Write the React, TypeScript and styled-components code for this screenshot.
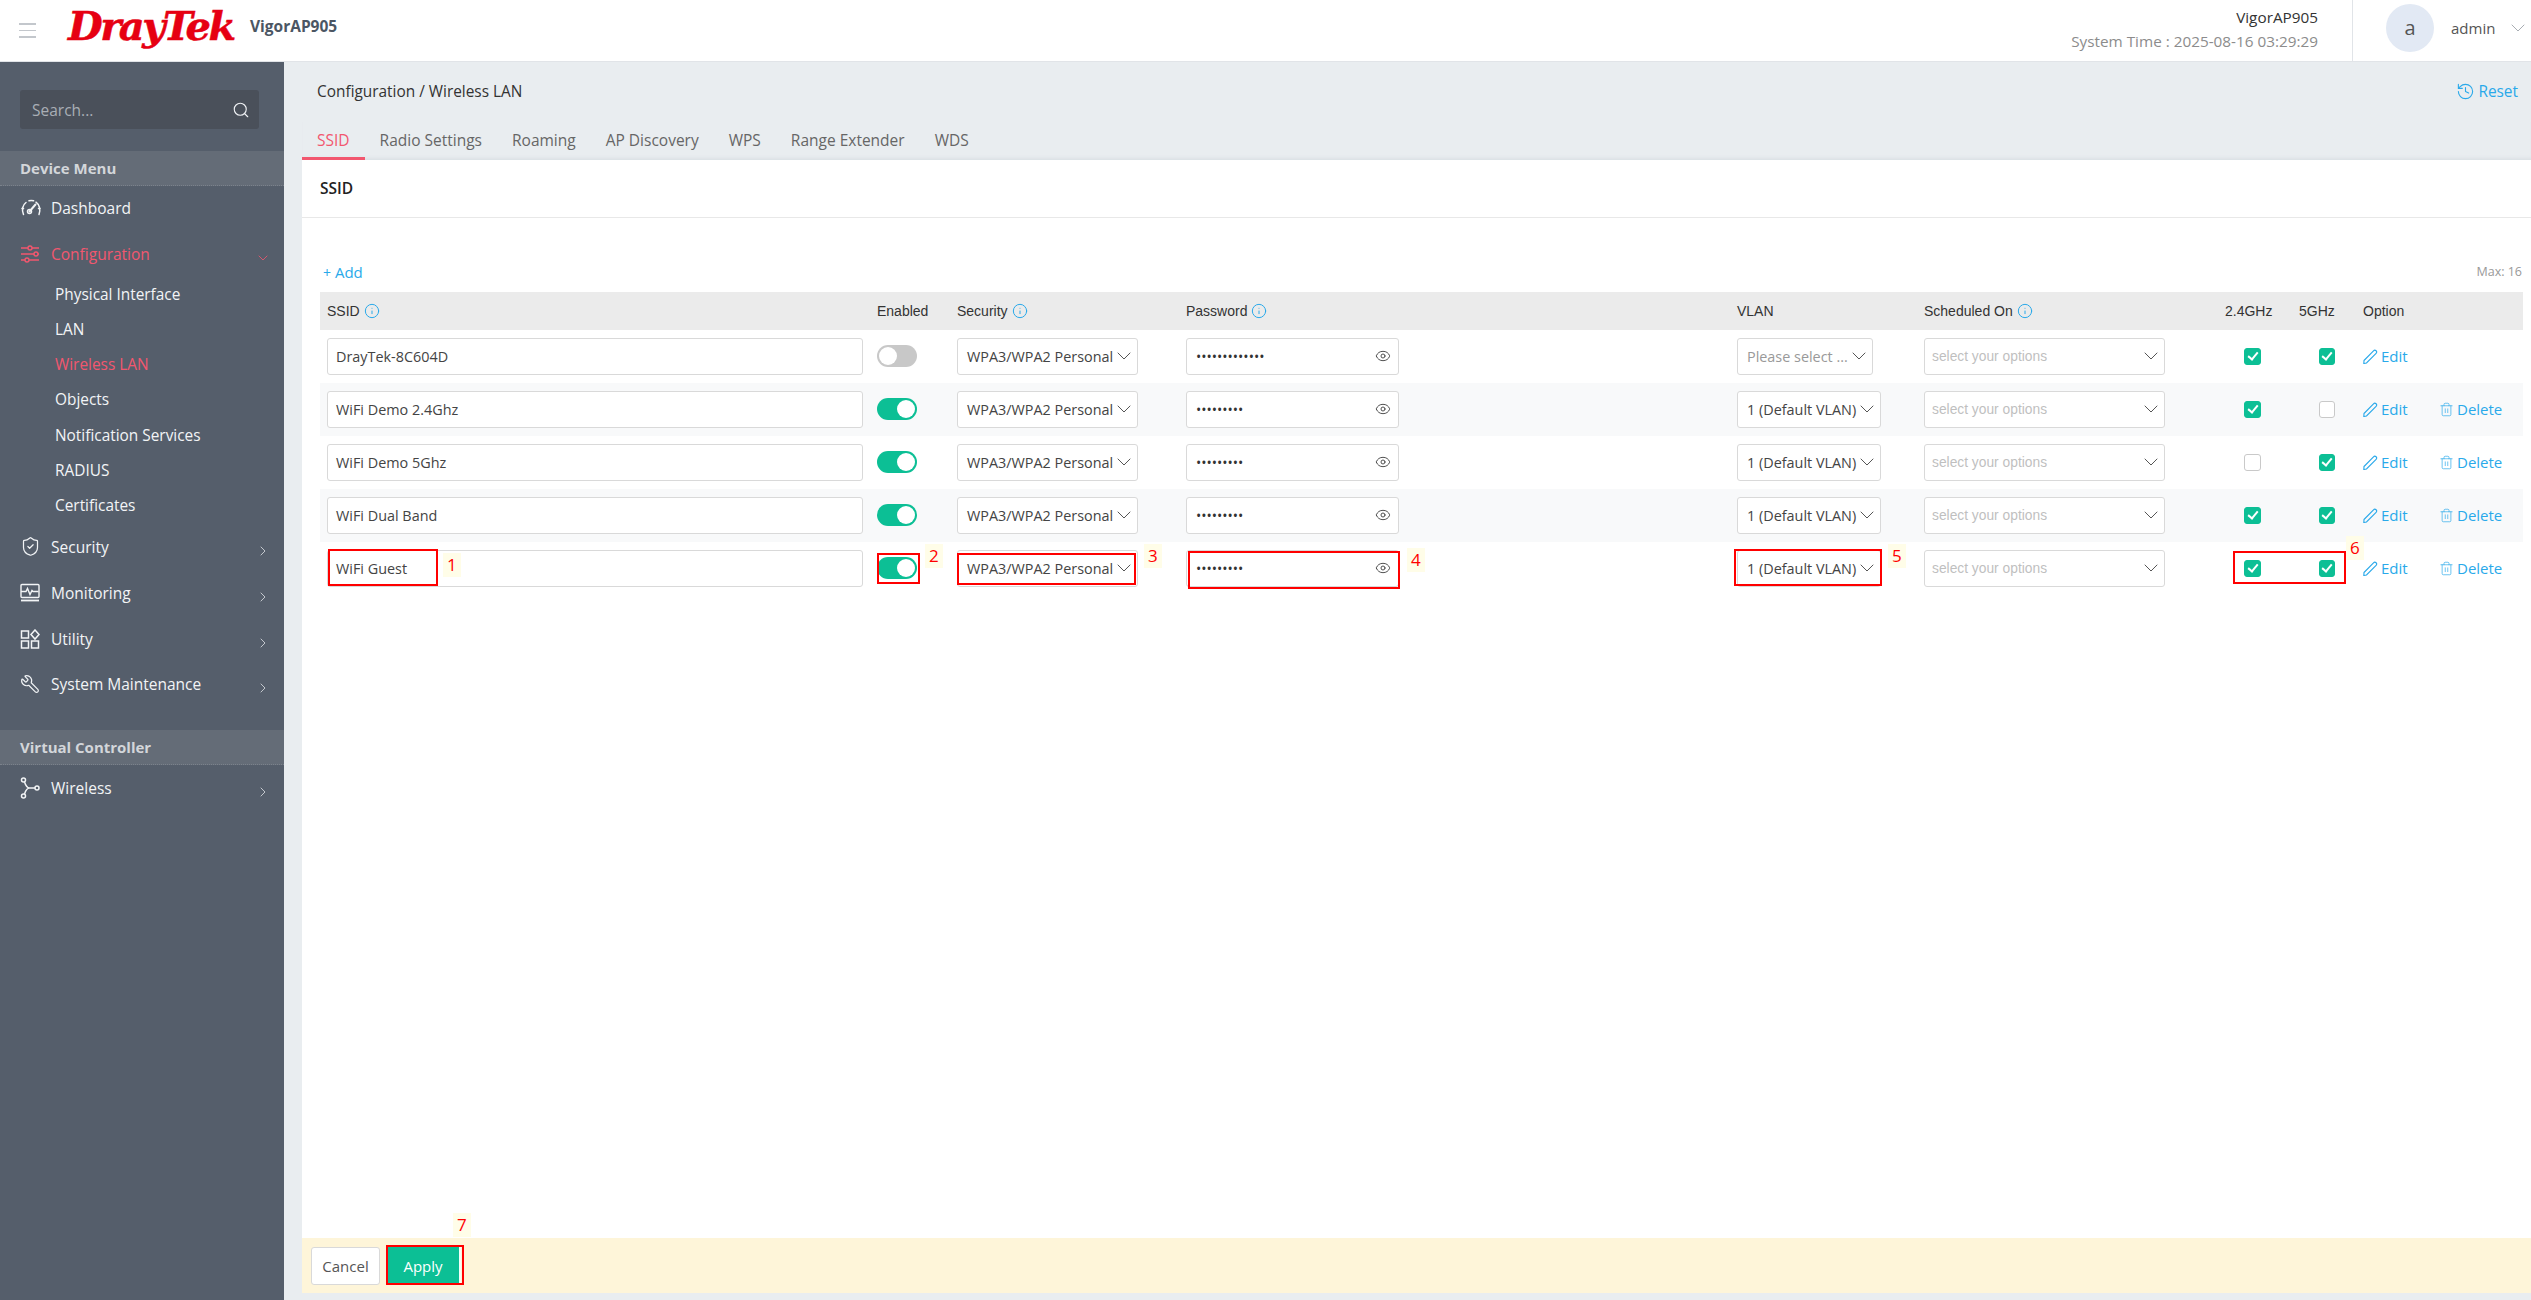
import React from "react";
import styled, { createGlobalStyle } from "styled-components";
import { ChevronDown, ChevronRight, Eye, History, Info, Search, ShieldCheck, Trash2, Wrench } from "lucide-react";

const GlobalStyle = createGlobalStyle`
  html, body {
    margin: 0;
    padding: 0;
    height: 100%;
    background: #e9edf0;
    font-family: "Open Sans", "Noto Sans", sans-serif;
    overflow: hidden;
  }
  * { box-sizing: border-box; }
`;

const GaugeIcon = () => (
  <svg width="22" height="20" viewBox="0 0 22 20" fill="none" stroke="currentColor" strokeWidth="1.5" strokeLinecap="round">
    <path d="M3.5 16.5C1.5 12 2.5 7 6 4.5M9 2.8c1.5-.4 3-.4 4.6 0M16 4.2c3.500 2.500 4.800 7.500 3 12.300" />
    <path d="M2 10.500h1.500M18.500 10.500h1.500" />
    <path d="M9.500 13.500l6-7" strokeWidth="2" />
    <circle cx="9.500" cy="13.500" r="2" />
  </svg>
);

const SlidersIcon = () => (
  <svg width="20" height="20" viewBox="0 0 20 20" fill="none" stroke="currentColor" strokeWidth="1.400">
    <path d="M1 4h7M12 4h7M1 10h13M18 10h1M1 16h4M9 16h10" />
    <circle cx="10" cy="4" r="2" />
    <circle cx="16" cy="10" r="2" />
    <circle cx="7" cy="16" r="2" />
  </svg>
);

const MonitorIcon = () => (
  <svg width="20" height="20" viewBox="0 0 20 20" fill="none" stroke="currentColor" strokeWidth="1.400">
    <rect x="1" y="1.500" width="18" height="13" rx="1" />
    <path d="M1 8.500h5l1.500-3 2.500 6 2-4 1 1h5.500" />
    <path d="M1 17.500h18" strokeWidth="1.800" />
  </svg>
);

const UtilityIcon = () => (
  <svg width="20" height="20" viewBox="0 0 20 20" fill="none" stroke="currentColor" strokeWidth="1.500">
    <rect x="1.500" y="2" width="7" height="7" />
    <rect x="1.500" y="12" width="7" height="7" />
    <rect x="11.500" y="12" width="7" height="7" />
    <path d="M15 1l4 4.500-4 4.500-4-4.500z" />
  </svg>
);

const BranchIcon = () => (
  <svg width="20" height="22" viewBox="0 0 20 22" fill="none" stroke="currentColor" strokeWidth="1.500">
    <circle cx="3.500" cy="3" r="2" />
    <circle cx="3.500" cy="19" r="2" />
    <circle cx="17" cy="11" r="2" />
    <path d="M4.500 5c1 3 2.500 6 5 6h5.500M4.500 17c1-3 2.500-6 5-6" />
  </svg>
);

const PencilIcon = () => (
  <svg width="15" height="15" viewBox="0 0 15 15" fill="none" stroke="currentColor" strokeWidth="1.100">
    <path d="M1 11.500L10.500 1.800a1.800 1.800 0 0 1 2.600 2.500L3.500 14l-2.700.5z" />
  </svg>
);

const App: React.FC = () => {
  const rows = [
    { ssid: "DrayTek-8C604D", on: false, pass: "•••••••••••••", vlan: "Please select ...", placeholder: true, g24: true, g5: true, del: false },
    { ssid: "WiFi Demo 2.4Ghz", on: true, pass: "•••••••••", vlan: "1 (Default VLAN)", placeholder: false, g24: true, g5: false, del: true },
    { ssid: "WiFi Demo 5Ghz", on: true, pass: "•••••••••", vlan: "1 (Default VLAN)", placeholder: false, g24: false, g5: true, del: true },
    { ssid: "WiFi Dual Band", on: true, pass: "•••••••••", vlan: "1 (Default VLAN)", placeholder: false, g24: true, g5: true, del: true },
    { ssid: "WiFi Guest", on: true, pass: "•••••••••", vlan: "1 (Default VLAN)", placeholder: false, g24: true, g5: true, del: true },
  ];

  return (
    <>
      <GlobalStyle />
      <Page>
        <Header>
          <Hamburger>
            <span />
            <span />
            <span />
          </Hamburger>
          <Logo>
            DrayTek
          </Logo>
          <Model>VigorAP905</Model>
          <HeaderInfo>
            <DeviceName>VigorAP905</DeviceName>
            <SystemTime>System Time : 2025-08-16 03:29:29</SystemTime>
          </HeaderInfo>
          <UserBox>
            <Avatar>a</Avatar>
            <UserName>admin</UserName>
            <ChevronDown size={24} strokeWidth={1} color="#a8adb3" />
          </UserBox>
        </Header>
        <Body>
          <Sidebar>
            <SearchBox>
              <span>Search...</span>
              <Search size={18} strokeWidth={1.5} color="#f0f2f5" />
            </SearchBox>
            <MenuTitle>Device Menu</MenuTitle>
            <MenuItem $top={4}>
              <MenuIcon><GaugeIcon /></MenuIcon>
              Dashboard
            </MenuItem>
            <MenuItem $active $top={10}>
              <MenuIcon><SlidersIcon /></MenuIcon>
              Configuration
              <MenuArrow $active><ChevronDown size={16} strokeWidth={1.200} /></MenuArrow>
            </MenuItem>
            <SubMenu>
              <SubItem>Physical Interface</SubItem>
              <SubItem>LAN</SubItem>
              <SubItem $active>Wireless LAN</SubItem>
              <SubItem>Objects</SubItem>
              <SubItem>Notification Services</SubItem>
              <SubItem>RADIUS</SubItem>
              <SubItem>Certificates</SubItem>
            </SubMenu>
            <MenuItem $top={6}>
              <MenuIcon><ShieldCheck size={21} strokeWidth={1.4} /></MenuIcon>
              Security
              <MenuArrow><ChevronRight size={16} strokeWidth={1.200} /></MenuArrow>
            </MenuItem>
            <MenuItem $top={10}>
              <MenuIcon><MonitorIcon /></MenuIcon>
              Monitoring
              <MenuArrow><ChevronRight size={16} strokeWidth={1.200} /></MenuArrow>
            </MenuItem>
            <MenuItem $top={10}>
              <MenuIcon><UtilityIcon /></MenuIcon>
              Utility
              <MenuArrow><ChevronRight size={16} strokeWidth={1.200} /></MenuArrow>
            </MenuItem>
            <MenuItem $top={9}>
              <MenuIcon><Wrench size={20} strokeWidth={1.4} style={{ transform: "scaleX(-1)" }} /></MenuIcon>
              System Maintenance
              <MenuArrow><ChevronRight size={16} strokeWidth={1.200} /></MenuArrow>
            </MenuItem>
            <MenuTitle $top={28}>Virtual Controller</MenuTitle>
            <MenuItem $top={5}>
              <MenuIcon><BranchIcon /></MenuIcon>
              Wireless
              <MenuArrow><ChevronRight size={16} strokeWidth={1.200} /></MenuArrow>
            </MenuItem>
          </Sidebar>
          <Main>
            <Breadcrumb>
              <span>Configuration / Wireless LAN</span>
              <ResetLink>
                <History size={19} strokeWidth={1.4} />
                Reset
              </ResetLink>
            </Breadcrumb>
            <Tabs>
              <Tab $active>SSID</Tab>
              <Tab>Radio Settings</Tab>
              <Tab>Roaming</Tab>
              <Tab>AP Discovery</Tab>
              <Tab>WPS</Tab>
              <Tab>Range Extender</Tab>
              <Tab>WDS</Tab>
            </Tabs>
            <Card>
              <CardTitle>SSID</CardTitle>
              <CardBody>
                <ToolRow>
                  <AddLink><AddPlus>+</AddPlus> Add</AddLink>
                  <MaxText>Max: 16</MaxText>
                </ToolRow>
                <Table>
                  <HeadRow>
                    <HeadCell>SSID <InfoIcon size={16} strokeWidth={1.5} /></HeadCell>
                    <HeadCell>Enabled</HeadCell>
                    <HeadCell>Security <InfoIcon size={16} strokeWidth={1.5} /></HeadCell>
                    <HeadCell>Password <InfoIcon size={16} strokeWidth={1.5} /></HeadCell>
                    <HeadCell>VLAN</HeadCell>
                    <HeadCell>Scheduled On <InfoIcon size={16} strokeWidth={1.5} /></HeadCell>
                    <HeadCell>2.4GHz</HeadCell>
                    <HeadCell>5GHz</HeadCell>
                    <HeadCell>Option</HeadCell>
                  </HeadRow>
                  {rows.map((row, index) => (
                    <Row key={row.ssid} $alt={index % 2 === 1}>
                      <Field $width={536} $pad={8}>{row.ssid}</Field>
                      <Toggle $on={row.on} />
                      <Field $width={181}>
                        WPA3/WPA2 Personal
                        <SelectArrow><ChevronDown size={24} strokeWidth={1} /></SelectArrow>
                      </Field>
                      <Field $width={213}>
                        <Dots>{row.pass}</Dots>
                        <EyeWrap><Eye size={16} strokeWidth={1.4} /></EyeWrap>
                      </Field>
                      <Field $width={row.placeholder ? 136 : 144} $muted={row.placeholder}>
                        {row.vlan}
                        <SelectArrow><ChevronDown size={24} strokeWidth={1} /></SelectArrow>
                      </Field>
                      <ScheduleField>
                        select your options
                        <SelectArrow><ChevronDown size={24} strokeWidth={1} /></SelectArrow>
                      </ScheduleField>
                      <CheckCell $pad={19}><CheckBox $checked={row.g24}>{row.g24 && <CheckMark />}</CheckBox></CheckCell>
                      <CheckCell $pad={20}><CheckBox $narrow $checked={row.g5}>{row.g5 && <CheckMark />}</CheckBox></CheckCell>
                      <ActionLink><PencilIcon /> Edit</ActionLink>
                      {row.del && <ActionLink><Trash2 size={15} strokeWidth={1.1} /> Delete</ActionLink>}
                    </Row>
                  ))}
                </Table>
              </CardBody>
              <Footer>
                <CancelButton>Cancel</CancelButton>
                <ApplyButton>Apply</ApplyButton>
              </Footer>
            </Card>
          </Main>
        </Body>
        <MarkBox $x={328} $y={549} $w={110} $h={37} />
        <MarkNum $x={443} $y={553}>1</MarkNum>
        <MarkBox $x={877} $y={553} $w={43} $h={31} />
        <MarkNum $x={925} $y={544}>2</MarkNum>
        <MarkBox $x={957} $y={553} $w={179} $h={32} />
        <MarkNum $x={1144} $y={544}>3</MarkNum>
        <MarkBox $x={1188} $y={551} $w={212} $h={38} />
        <MarkNum $x={1407} $y={548}>4</MarkNum>
        <MarkBox $x={1734} $y={549} $w={148} $h={37} />
        <MarkNum $x={1888} $y={544}>5</MarkNum>
        <MarkBox $x={2233} $y={551} $w={113} $h={33} />
        <MarkNum $x={2346} $y={536}>6</MarkNum>
        <MarkBox $x={386} $y={1245} $w={78} $h={40} />
        <MarkNum $x={453} $y={1213}>7</MarkNum>
      </Page>
    </>
  );
};

export default App;

const Page = styled.div`
  position: relative;
  display: flex;
  flex-direction: column;
  width: 2531px;
  height: 1300px;
  overflow: hidden;
`;

const Header = styled.header`
  display: flex;
  align-items: stretch;
  height: 62px;
  flex: none;
  background: #fff;
  border-bottom: 1px solid #e1e4e8;
`;

const Hamburger = styled.div`
  display: flex;
  flex-direction: column;
  justify-content: center;
  gap: 5px;
  width: 17px;
  margin-left: 19px;

  span {
    display: block;
    height: 1.5px;
    background: #c3c7cc;
  }
`;

const Logo = styled.div`
  margin-left: 32px;
  width: 182px;
  font-family: "DejaVu Serif", serif;
  font-style: italic;
  font-weight: 700;
  font-size: 40px;
  letter-spacing: -2.500px;
  line-height: 52px;
  color: #e60012;
  -webkit-text-stroke: 0.5px #e60012;
`;

const Model = styled.div`
  align-self: center;
  margin-top: -10px;
  font-size: 15.500px;
  font-weight: 700;
  color: #4b5663;
`;

const HeaderInfo = styled.div`
  margin-left: auto;
  padding: 5px 34px 0 0;
  border-right: 1px solid #e1e4e8;
  text-align: right;
`;

const DeviceName = styled.div`
  font-size: 15.300px;
  line-height: 24px;
  color: #333;
`;

const SystemTime = styled.div`
  font-size: 15.300px;
  line-height: 24px;
  color: #8c8c8c;
`;

const UserBox = styled.div`
  display: flex;
  align-items: center;
  width: 178px;
  padding: 0 0 6px 33px;
`;

const Avatar = styled.div`
  display: flex;
  align-items: center;
  justify-content: center;
  flex: none;
  width: 48px;
  height: 48px;
  border-radius: 50%;
  background: #e2e9f4;
  font-size: 20px;
  color: #555;
`;

const UserName = styled.div`
  margin: 0 11px 0 17px;
  font-size: 15px;
  color: #555;
`;

const Body = styled.div`
  display: flex;
  flex: 1;
  min-height: 0;
`;

const Sidebar = styled.aside`
  width: 284px;
  flex: none;
  padding-top: 28px;
  background: #555e6b;
  color: #f2f4f6;
`;

const SearchBox = styled.div`
  display: flex;
  align-items: center;
  justify-content: space-between;
  width: 239px;
  height: 39px;
  margin: 0 0 22px 20px;
  padding: 0 9px 0 12px;
  border-radius: 3px;
  background: #4a505a;
  color: #a9aeb5;
  font-size: 15.500px;
`;

const MenuTitle = styled.div<{ $top?: number }>`
  height: 35px;
  margin-top: ${(p) => p.$top ?? 0}px;
  padding-left: 20px;
  background: #646c77;
  border-bottom: 1px dotted #7b828c;
  color: #d3d6da;
  font-size: 15px;
  font-weight: 700;
  line-height: 34px;
`;

const MenuItem = styled.div<{ $active?: boolean; $top: number }>`
  position: relative;
  display: flex;
  align-items: center;
  height: 36px;
  margin-top: ${(p) => p.$top}px;
  padding-left: 20px;
  color: ${(p) => (p.$active ? "#f2576f" : "#f2f4f6")};
  font-size: 15.500px;
`;

const MenuIcon = styled.span`
  display: inline-flex;
  justify-content: flex-start;
  width: 31px;
  flex: none;
`;

const MenuArrow = styled.span<{ $active?: boolean }>`
  position: absolute;
  left: 255px;
  top: 14px;
  line-height: 0;
  color: ${(p) => (p.$active ? "#f2576f" : "#dfe2e6")};
`;

const SubMenu = styled.div`
  display: flex;
  flex-direction: column;
  margin-top: 5px;
  padding-left: 55px;
`;

const SubItem = styled.div<{ $active?: boolean }>`
  height: 35.150px;
  font-size: 15.400px;
  line-height: 35px;
  color: ${(p) => (p.$active ? "#f2576f" : "#f2f4f6")};
`;

const Main = styled.main`
  display: flex;
  flex-direction: column;
  flex: 1;
  min-width: 0;
  padding: 0 0 7px 18px;
`;

const Breadcrumb = styled.div`
  display: flex;
  align-items: center;
  justify-content: space-between;
  height: 60px;
  padding: 0 13px 2px 15px;
  font-size: 15.400px;
  color: #333;
`;

const ResetLink = styled.span`
  display: flex;
  align-items: center;
  gap: 3px;
  color: #29a9ea;
`;

const Tabs = styled.div`
  display: flex;
  height: 38px;
  flex: none;
  box-shadow: inset 0 -4px 4px -3px #d5dbe0;
`;

const Tab = styled.div<{ $active?: boolean }>`
  height: 38px;
  padding: 0 15px;
  font-size: 15.500px;
  line-height: 36px;
  white-space: nowrap;
  color: ${(p) => (p.$active ? "#f2576f" : "#666")};
  border-bottom: 3px solid ${(p) => (p.$active ? "#f2576f" : "transparent")};
`;

const Card = styled.section`
  display: flex;
  flex-direction: column;
  flex: 1;
  min-height: 0;
  background: #fff;
`;

const CardTitle = styled.div`
  height: 58px;
  padding-left: 18px;
  border-bottom: 1px solid #e8e8e8;
  color: #222;
  font-size: 15.500px;
  font-weight: 600;
  line-height: 57px;
`;

const CardBody = styled.div`
  flex: 1;
  min-height: 0;
  padding: 40px 8px 0 18px;
`;

const ToolRow = styled.div`
  display: flex;
  align-items: flex-start;
  justify-content: space-between;
  height: 34px;
  padding: 4px 1px 0 3px;
`;

const AddLink = styled.span`
  color: #29a9ea;
  font-size: 15px;
`;

const AddPlus = styled.span`
  font-size: 14px;
`;

const MaxText = styled.span`
  margin-top: 1px;
  color: #999;
  font-size: 12.500px;
`;

const Table = styled.div`
  width: 2203px;
`;

const HeadRow = styled.div`
  display: grid;
  grid-template-columns: 550px 80px 229px 551px 187px 301px 74px 64px 160px;
  align-items: center;
  height: 38px;
  padding-left: 7px;
  background: #ebebeb;
`;

const HeadCell = styled.div`
  display: flex;
  align-items: center;
  gap: 4px;
  font-family: "Liberation Sans", Arial, sans-serif;
  font-size: 14px;
  color: #333;
`;

const InfoIcon = styled(Info)`
  color: #29a9ea;
`;

const Row = styled.div<{ $alt: boolean }>`
  display: grid;
  grid-template-columns: 550px 80px 229px 551px 187px 301px 74px 64px 76px 84px;
  align-items: center;
  height: 52.900px;
  padding-left: 7px;
  background: ${(p) => (p.$alt ? "#f8f9fa" : "#fff")};
`;

const Field = styled.div<{ $width: number; $muted?: boolean; $pad?: number }>`
  position: relative;
  display: flex;
  align-items: center;
  width: ${(p) => p.$width}px;
  height: 37px;
  padding-left: ${(p) => p.$pad ?? 9}px;
  border: 1px solid #d9d9d9;
  border-radius: 3px;
  background: #fff;
  font-size: 14.400px;
  white-space: nowrap;
  color: ${(p) => (p.$muted ? "#999" : "#444")};
`;

const ScheduleField = styled.div`
  position: relative;
  display: flex;
  align-items: center;
  width: 241px;
  height: 37px;
  padding-left: 7px;
  border: 1px solid #d9d9d9;
  border-radius: 3px;
  background: #fff;
  font-family: "Liberation Sans", Arial, sans-serif;
  font-size: 13.800px;
  color: #bfbfbf;
`;

const SelectArrow = styled.span`
  position: absolute;
  right: 1px;
  top: 5px;
  color: #555;
  line-height: 0;
`;

const Dots = styled.span`
  font-size: 14px;
  letter-spacing: 0;
  color: #333;
`;

const EyeWrap = styled.span`
  position: absolute;
  right: 7px;
  top: 9px;
  color: #444;
  line-height: 0;
`;

const Toggle = styled.div<{ $on: boolean }>`
  position: relative;
  width: 40px;
  height: 22px;
  border-radius: 11px;
  background: ${(p) => (p.$on ? "#0cbf95" : "#c8c8c8")};

  &::after {
    content: "";
    position: absolute;
    top: 2px;
    left: ${(p) => (p.$on ? "20px" : "2px")};
    width: 18px;
    height: 18px;
    border-radius: 50%;
    background: #fff;
  }
`;

const CheckCell = styled.div<{ $pad: number }>`
  padding-left: ${(p) => p.$pad}px;
`;

const CheckBox = styled.div<{ $checked: boolean; $narrow?: boolean }>`
  display: flex;
  align-items: center;
  justify-content: center;
  width: ${(p) => (p.$narrow ? 16 : 17)}px;
  height: 17px;
  border-radius: 3px;
  border: 1px solid ${(p) => (p.$checked ? "#0cbf95" : "#c9c9c9")};
  background: ${(p) => (p.$checked ? "#0cbf95" : "#fff")};
`;

const CheckMark = styled.span`
  display: block;
  width: 6px;
  height: 10px;
  margin-top: -2px;
  border: solid #fff;
  border-width: 0 2px 2px 0;
  transform: rotate(40deg);
`;

const ActionLink = styled.div`
  display: flex;
  align-items: center;
  gap: 3px;
  color: #29a9ea;
  font-size: 15px;
  white-space: nowrap;
`;

const Footer = styled.div`
  display: flex;
  align-items: center;
  gap: 7px;
  flex: none;
  height: 55px;
  padding-left: 9px;
  background: #fef5d9;
`;

const CancelButton = styled.div`
  display: flex;
  align-items: center;
  justify-content: center;
  width: 69px;
  height: 38px;
  border: 1px solid #d9d9d9;
  border-radius: 3px;
  background: #fff;
  font-size: 15px;
  color: #555;
`;

const ApplyButton = styled.div`
  display: flex;
  align-items: center;
  justify-content: center;
  width: 74px;
  height: 38px;
  border-right: 2px solid #f1fff9;
  background: #0cbf95;
  font-size: 15px;
  color: #fff;
`;

const MarkBox = styled.div<{ $x: number; $y: number; $w: number; $h: number }>`
  position: absolute;
  left: ${(p) => p.$x}px;
  top: ${(p) => p.$y}px;
  width: ${(p) => p.$w}px;
  height: ${(p) => p.$h}px;
  border: 2px solid #f00;
  pointer-events: none;
`;

const MarkNum = styled.div<{ $x: number; $y: number }>`
  position: absolute;
  left: ${(p) => p.$x}px;
  top: ${(p) => p.$y}px;
  padding: 0 4px;
  background: #fffde8;
  color: #f00;
  font-size: 17px;
  line-height: 24px;
`;
